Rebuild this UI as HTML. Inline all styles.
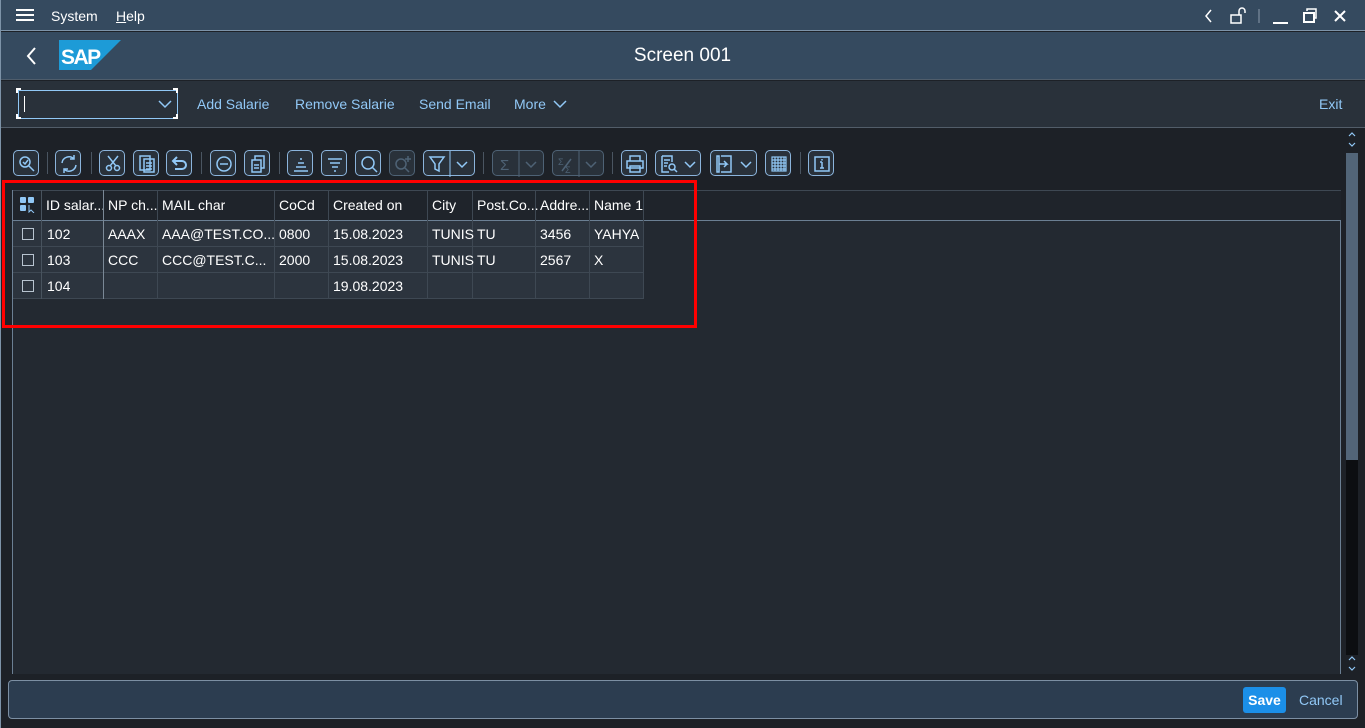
<!DOCTYPE html>
<html><head><meta charset="utf-8"><style>
*{box-sizing:border-box;margin:0;padding:0}
body{width:1365px;height:728px;overflow:hidden;background:#1d2127;font-family:"Liberation Sans",sans-serif;position:relative;color:#fff}
.a{position:absolute}
.menu{left:0;top:0;width:1365px;height:31px;background:#354a5f;border-bottom:1px solid #7d93a8;border-left:1px solid #7d93a8}
.title{left:0;top:32px;width:1365px;height:48px;background:#354a5f;border-bottom:1px solid #4f5d6b}
.apptb{left:0;top:81px;width:1365px;height:47px;background:#29313a;border-bottom:1px solid #525d69}
.mt{font-size:14px;color:#fff;top:8px}
.lnk{font-size:14px;color:#91c8f6;top:96px}
.btn{position:absolute;top:150px;height:26px;border:1px solid #8bb4dc;border-radius:5px;background:#29313a}
.btn.d{border-color:#4e6275}
.sep{position:absolute;top:152px;width:1px;height:22px;background:#4a5561}
.btn svg{position:absolute;left:0;top:0}
.grid{left:12px;top:190px;width:1329px;height:484px;background:#232931;border-left:1px solid #6b7f93;border-right:1px solid #6b7f93}
.hdr{position:absolute;left:0;top:0;width:1328px;height:31px;background:#1f242b;border-bottom:1px solid #6b7f93;border-top:1px solid #3e4853}
.cell{position:absolute;font-size:14px;color:#fff;white-space:nowrap;overflow:hidden}
.row{position:absolute;left:0;width:631px;height:26px;background:#2c343e;border-bottom:1px solid #3e4853}
.vl{position:absolute;width:1px;background:#3e4853}
.cb{position:absolute;left:9px;width:12px;height:12px;border:1px solid #b8c4d0}
</style></head><body>
<div class="a menu"></div>
<div class="a" style="left:16px;top:9px;width:18px;height:2px;background:#fff;box-shadow:0 5px 0 #fff,0 10px 0 #fff"></div>
<div class="a mt" style="left:51px">System</div>
<div class="a mt" style="left:116px"><u>H</u>elp</div>
<svg class="a" style="left:1195px;top:6px" width="160" height="20" viewBox="0 0 160 20" fill="none" stroke="#fff" stroke-width="1.5">
<path d="M16 4l-5 6 5 6"/>
<rect x="36" y="9" width="10" height="8"/><path d="M44 9V5a3 3 0 016 0v2"/>
<path d="M64 3v14" stroke="#8a9aab" stroke-width="1"/>
<path d="M78 17h15" stroke-width="2"/>
<rect x="109" y="7" width="10" height="9" stroke-width="2"/><path d="M112 5V3h9v9h-2"/>
<path d="M140 5l10 10M150 5l-10 10" stroke-width="2"/>
</svg>
<div class="a title"></div>
<svg class="a" style="left:24px;top:46px" width="14" height="20"><path d="M11 2L4 10l7 8" fill="none" stroke="#fff" stroke-width="2"/></svg>
<svg class="a" style="left:59px;top:40px" width="62" height="30"><polygon points="0,0 62,0 32,30 0,30" fill="#1d9bd7"/><text x="2" y="24" font-family="Liberation Sans" font-weight="bold" font-size="21" fill="#fff" letter-spacing="-1.5">SAP</text></svg>
<div class="a" style="left:0;top:45px;width:1365px;text-align:center;font-size:19px;color:#fff">Screen 001</div>
<div class="a apptb"></div>
<div class="a" style="left:18px;top:90px;width:160px;height:29px;border:1px solid #91c8f6"></div>
<div class="a" style="left:16px;top:88px;width:5px;height:5px;border-left:2px solid #fff;border-top:2px solid #fff"></div>
<div class="a" style="left:173px;top:88px;width:5px;height:5px;border-right:2px solid #fff;border-top:2px solid #fff"></div>
<div class="a" style="left:16px;top:114px;width:5px;height:5px;border-left:2px solid #fff;border-bottom:2px solid #fff"></div>
<div class="a" style="left:173px;top:114px;width:5px;height:5px;border-right:2px solid #fff;border-bottom:2px solid #fff"></div>
<div class="a" style="left:24px;top:96px;width:1px;height:16px;background:#fff"></div>
<svg class="a" style="left:158px;top:99px" width="14" height="10"><path d="M1 2l6 6 6-6" fill="none" stroke="#91c8f6" stroke-width="1.5"/></svg>
<div class="a lnk" style="left:197px">Add Salarie</div>
<div class="a lnk" style="left:295px">Remove Salarie</div>
<div class="a lnk" style="left:419px">Send Email</div>
<div class="a lnk" style="left:514px">More</div>
<svg class="a" style="left:553px;top:99px" width="14" height="10"><path d="M1 2l6 6 6-6" fill="none" stroke="#91c8f6" stroke-width="1.5"/></svg>
<div class="a lnk" style="left:1319px">Exit</div>

<div class="btn" style="left:13px;width:26px"><svg width="26" height="26" fill="none" stroke="#91c8f6" stroke-width="1.5"><circle cx="11" cy="11" r="5"/><path d="M15 15l5 5M9 11l2 2 3-4"/></svg></div>
<div class="sep" style="left:47px"></div>
<div class="btn" style="left:55px;width:26px"><svg width="26" height="26" fill="none" stroke="#91c8f6" stroke-width="1.5"><path d="M6 12a7 7 0 0112-4M20 14a7 7 0 01-12 4M18 4v4h-4M8 22v-4h4"/></svg></div>
<div class="sep" style="left:91px"></div>
<div class="btn" style="left:99px;width:26px"><svg width="26" height="26" fill="none" stroke="#91c8f6" stroke-width="1.5"><circle cx="9" cy="17" r="2.5"/><circle cx="17" cy="17" r="2.5"/><path d="M8 5l8 10M18 5l-8 10"/></svg></div>
<div class="btn" style="left:133px;width:26px"><svg width="26" height="26" fill="none" stroke="#91c8f6" stroke-width="1.5"><rect x="6" y="5" width="10" height="14"/><rect x="10" y="8" width="10" height="13"/><path d="M12 12h6M12 15h6M12 18h6"/></svg></div>
<div class="btn" style="left:166px;width:26px"><svg width="26" height="26" fill="none" stroke="#91c8f6" stroke-width="2"><path d="M10 6l-4 4 4 4M6 10h9a4 4 0 010 8H8"/></svg></div>
<div class="sep" style="left:201px"></div>
<div class="btn" style="left:210px;width:26px"><svg width="26" height="26" fill="none" stroke="#91c8f6" stroke-width="1.5"><circle cx="13" cy="13" r="7"/><path d="M9 13h8"/></svg></div>
<div class="btn" style="left:244px;width:26px"><svg width="26" height="26" fill="none" stroke="#91c8f6" stroke-width="1.5"><rect x="7" y="9" width="9" height="12"/><path d="M10 9V5h9v12h-3M9 14h5M9 17h5"/></svg></div>
<div class="sep" style="left:279px"></div>
<div class="btn" style="left:287px;width:26px"><svg width="26" height="26" fill="none" stroke="#91c8f6" stroke-width="1.5"><path d="M12 8h2M10 12h6M8 16h10M6 20h14"/></svg></div>
<div class="btn" style="left:321px;width:26px"><svg width="26" height="26" fill="none" stroke="#91c8f6" stroke-width="1.5"><path d="M6 8h14M8 12h10M10 16h6M12 20h2"/></svg></div>
<div class="btn" style="left:355px;width:26px"><svg width="26" height="26" fill="none" stroke="#91c8f6" stroke-width="1.5"><circle cx="12" cy="12" r="6"/><path d="M16 16l5 5"/></svg></div>
<div class="btn d" style="left:389px;width:26px"><svg width="26" height="26" fill="none" stroke="#4e6275" stroke-width="1.5"><circle cx="11" cy="13" r="5"/><path d="M15 17l4 4M18 5v6M15 8h6"/></svg></div>
<div class="btn" style="left:423px;width:52px"><svg width="52" height="26" fill="none" stroke="#91c8f6" stroke-width="1.5"><path d="M6 6h14l-5 7v7l-4-2v-5z"/><path d="M26 0v26" stroke-width="1"/><path d="M33 11l5 5 5-5"/></svg></div>
<div class="sep" style="left:483px"></div>
<div class="btn d" style="left:492px;width:52px"><svg width="52" height="26" fill="none" stroke="#4e6275" stroke-width="1.5"><text x="7" y="19" font-size="15" fill="#4e6275" stroke="none">Σ</text><path d="M26 0v26" stroke-width="1"/><path d="M33 11l5 5 5-5"/></svg></div>
<div class="btn d" style="left:552px;width:52px"><svg width="52" height="26" fill="none" stroke="#4e6275" stroke-width="1.5"><text x="5" y="14" font-size="9" fill="#4e6275" stroke="none">Σ</text><text x="12" y="22" font-size="9" fill="#4e6275" stroke="none">Σ</text><path d="M9 20l9-12"/><path d="M26 0v26" stroke-width="1"/><path d="M33 11l5 5 5-5"/></svg></div>
<div class="sep" style="left:612px"></div>
<div class="btn" style="left:621px;width:26px"><svg width="26" height="26" fill="none" stroke="#91c8f6" stroke-width="1.5"><rect x="5" y="10" width="16" height="7"/><path d="M8 10V5h10v5M8 15h10v6H8z"/></svg></div>
<div class="btn" style="left:655px;width:46px"><svg width="46" height="26" fill="none" stroke="#91c8f6" stroke-width="1.5"><path d="M6 5h10v6M6 5v16h7M8 9h6M8 12h4M8 15h3"/><circle cx="16" cy="16" r="3"/><path d="M18 18l3 3M29 11l5 5 5-5"/></svg></div>
<div class="btn" style="left:710px;width:47px"><svg width="47" height="26" fill="none" stroke="#91c8f6" stroke-width="1.5"><path d="M10 5h10v16H10M6 5h2v16h-2z"/><path d="M8 13h8l-3-3M16 13l-3 3M30 11l5 5 5-5"/></svg></div>
<div class="btn" style="left:765px;width:26px"><svg width="26" height="26" fill="none" stroke="#91c8f6" stroke-width="1.2"><rect x="6" y="6" width="14" height="14"/><path d="M6 9h14M6 12h14M6 15h14M6 18h14M9 6v14M12 6v14M15 6v14M18 6v14"/></svg></div>
<div class="sep" style="left:800px"></div>
<div class="btn" style="left:808px;width:26px"><svg width="26" height="26" fill="none" stroke="#91c8f6" stroke-width="1.5"><rect x="6" y="6" width="14" height="14"/><path d="M13 11v6M11 17h4M11 11h2M13 8v1.5"/></svg></div>

<div class="a grid">
<div class="hdr"></div>
<svg class="a" style="left:7px;top:7px" width="18" height="16"><rect x="0" y="0" width="6" height="6" rx="1" fill="#91c8f6"/><rect x="8" y="0" width="6" height="6" rx="1" fill="#91c8f6"/><rect x="0" y="8" width="6" height="6" rx="1" fill="#91c8f6"/><path d="M9 8l0 7 2-2 3 3" fill="none" stroke="#91c8f6" stroke-width="1"/></svg>
<div class="row" style="top:31px"></div>
<div class="row" style="top:57px"></div>
<div class="row" style="top:83px"></div>
<div class="vl" style="left:28px;top:0;height:109px;background:#48535e"></div>
<div class="vl" style="left:90px;top:0;height:109px;background:#7a8896"></div>
<div class="vl" style="left:144px;top:0;height:109px"></div>
<div class="vl" style="left:261px;top:0;height:109px"></div>
<div class="vl" style="left:315px;top:0;height:109px"></div>
<div class="vl" style="left:414px;top:0;height:109px"></div>
<div class="vl" style="left:459px;top:0;height:109px"></div>
<div class="vl" style="left:522px;top:0;height:109px"></div>
<div class="vl" style="left:576px;top:0;height:109px"></div>
<div class="vl" style="left:630px;top:0;height:109px"></div>
<div class="cb" style="top:38px"></div><div class="cb" style="top:64px"></div><div class="cb" style="top:90px"></div>
<div class="cell" style="left:33px;top:7px;width:57px">ID salar...</div>
<div class="cell" style="left:95px;top:7px">NP ch...</div>
<div class="cell" style="left:149px;top:7px">MAIL char</div>
<div class="cell" style="left:266px;top:7px">CoCd</div>
<div class="cell" style="left:320px;top:7px">Created on</div>
<div class="cell" style="left:419px;top:7px">City</div>
<div class="cell" style="left:464px;top:7px">Post.Co...</div>
<div class="cell" style="left:527px;top:7px">Addre...</div>
<div class="cell" style="left:581px;top:7px">Name 1</div>
<div class="cell" style="left:34px;top:36px">102</div><div class="cell" style="left:95px;top:36px">AAAX</div><div class="cell" style="left:149px;top:36px">AAA@TEST.CO...</div><div class="cell" style="left:266px;top:36px">0800</div><div class="cell" style="left:320px;top:36px">15.08.2023</div><div class="cell" style="left:419px;top:36px">TUNIS</div><div class="cell" style="left:464px;top:36px">TU</div><div class="cell" style="left:527px;top:36px">3456</div><div class="cell" style="left:581px;top:36px">YAHYA</div>
<div class="cell" style="left:34px;top:62px">103</div><div class="cell" style="left:95px;top:62px">CCC</div><div class="cell" style="left:149px;top:62px">CCC@TEST.C...</div><div class="cell" style="left:266px;top:62px">2000</div><div class="cell" style="left:320px;top:62px">15.08.2023</div><div class="cell" style="left:419px;top:62px">TUNIS</div><div class="cell" style="left:464px;top:62px">TU</div><div class="cell" style="left:527px;top:62px">2567</div><div class="cell" style="left:581px;top:62px">X</div>
<div class="cell" style="left:34px;top:88px">104</div><div class="cell" style="left:320px;top:88px">19.08.2023</div>
</div>
<div class="a" style="left:2px;top:180px;width:695px;height:148px;border:3px solid #ff0000"></div>

<div class="a" style="left:1346px;top:128px;width:12px;height:546px;background:#1d2127"></div>
<div class="a" style="left:1346px;top:153px;width:12px;height:307px;background:#526578"></div>
<div class="a" style="left:1346px;top:460px;width:12px;height:195px;background:#0c0e11"></div>
<svg class="a" style="left:1346px;top:130px" width="12" height="20" fill="none" stroke="#91c8f6" stroke-width="1.2"><path d="M3 6l3-3 3 3M3 13l3 3 3-3"/></svg>
<svg class="a" style="left:1346px;top:654px" width="12" height="20" fill="none" stroke="#91c8f6" stroke-width="1.2"><path d="M3 6l3-3 3 3M3 13l3 3 3-3"/></svg>

<div class="a" style="left:8px;top:680px;width:1350px;height:39px;background:#2c3d50;border:1px solid #7c8fa3;border-radius:4px"></div>
<div class="a" style="left:1243px;top:687px;width:43px;height:26px;background:#1b8fe8;border-radius:3px;font-size:14px;font-weight:bold;color:#fff;text-align:center;line-height:26px">Save</div>
<div class="a" style="left:1299px;top:692px;font-size:14px;color:#91c8f6">Cancel</div>
<div class="a" style="left:0;top:0;width:1px;height:728px;background:#7d93a8"></div>
</body></html>
